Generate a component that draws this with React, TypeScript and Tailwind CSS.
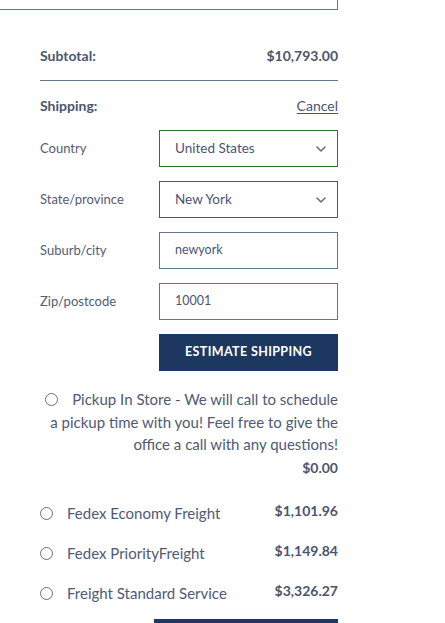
import React from "react";

const font = { fontFamily: "Lato, 'Open Sans', sans-serif" };

function Chevron() {
  return (
    <svg width="10" height="6" viewBox="0 0 10 6" className="text-[#6b6f78]">
      <path d="M1 1l4 4 4-4" fill="none" stroke="currentColor" strokeWidth="1.6" strokeLinecap="round" strokeLinejoin="round" />
    </svg>
  );
}

function Row({ label, value, select }: { label: string; value: string; select?: boolean }) {
  return (
    <div className="flex items-center">
      <div className="w-[119px] text-[13px] text-[#535c74]">{label}</div>
      <div
        className={`w-[179px] h-[37px] flex items-center justify-between pl-[15px] pr-[11px] border ${
          select ? "border-[#247a27]" : "border-[#65758a]"
        } text-[13.5px] text-[#4a5571]`}
      >
        <span className={select ? "" : "text-[12.5px]"}>{value}</span>
        {select && <Chevron />}
      </div>
    </div>
  );
}

function Radio() {
  return <span className="inline-block w-[13px] h-[13px] rounded-full border border-[#6e6e6e] bg-white shrink-0" />;
}

function Option({ name, price }: { name: string; price: string }) {
  return (
    <div className="flex items-start h-[40px]">
      <div className="flex items-center h-[20px] mt-[3px]">
        <Radio />
        <span className="ml-[14px] text-[15px] text-[#4f5a76]">{name}</span>
      </div>
      <div className="ml-auto text-[14px] font-bold text-[#4a5570]">{price}</div>
    </div>
  );
}

export default function App() {
  return (
    <div className="w-[445px] h-[623px] bg-white overflow-hidden relative" style={font}>
      <div className="w-[338px] h-[10px] border-r border-b border-[#65758a]" />
      <div className="pl-[40px] w-[338px]">
        <div className="flex justify-between items-center h-[20px] mt-[35px] text-[14px] font-bold text-[#4a5570]">
          <span>Subtotal:</span>
          <span>$10,793.00</span>
        </div>
        <div className="h-px bg-[#65758a] mt-[15px]" />
        <div className="flex justify-between items-center h-[20px] mt-[14px] text-[14px] text-[#4a5570]">
          <span className="font-bold">Shipping:</span>
          <span className="underline underline-offset-2">Cancel</span>
        </div>
        <div className="mt-[15px] flex flex-col gap-[14px]">
          <Row label="Country" value="United States" select />
          <Row label="State/province" value="New York" select />
          <Row label="Suburb/city" value="newyork" />
          <Row label="Zip/postcode" value="10001" />
        </div>
        <div className="flex justify-end mt-[14px]">
          <button className="w-[179px] h-[37px] bg-[#1c3861] text-white text-[12.5px] font-bold tracking-[0.03em]">
            ESTIMATE SHIPPING
          </button>
        </div>
        <p className="mt-[17px] text-right text-[15px] leading-[22px] text-[#4f5a76]">
          <span className="inline-block align-[-1px] mr-[14px]">
            <Radio />
          </span>
          Pickup In Store - We will call to schedule a pickup time with you! Feel free to give the office a call with
          any questions!
        </p>
        <div className="text-right text-[14px] font-bold text-[#4a5570] leading-[24px] mt-[1px]">$0.00</div>
        <div className="mt-[20px]">
          <Option name="Fedex Economy Freight" price="$1,101.96" />
          <Option name="Fedex PriorityFreight" price="$1,149.84" />
          <Option name="Freight Standard Service" price="$3,326.27" />
        </div>
        <div className="flex justify-end -mt-[1px]">
          <div className="w-[184px] h-[37px] bg-[#1c3861]" />
        </div>
      </div>
    </div>
  );
}
